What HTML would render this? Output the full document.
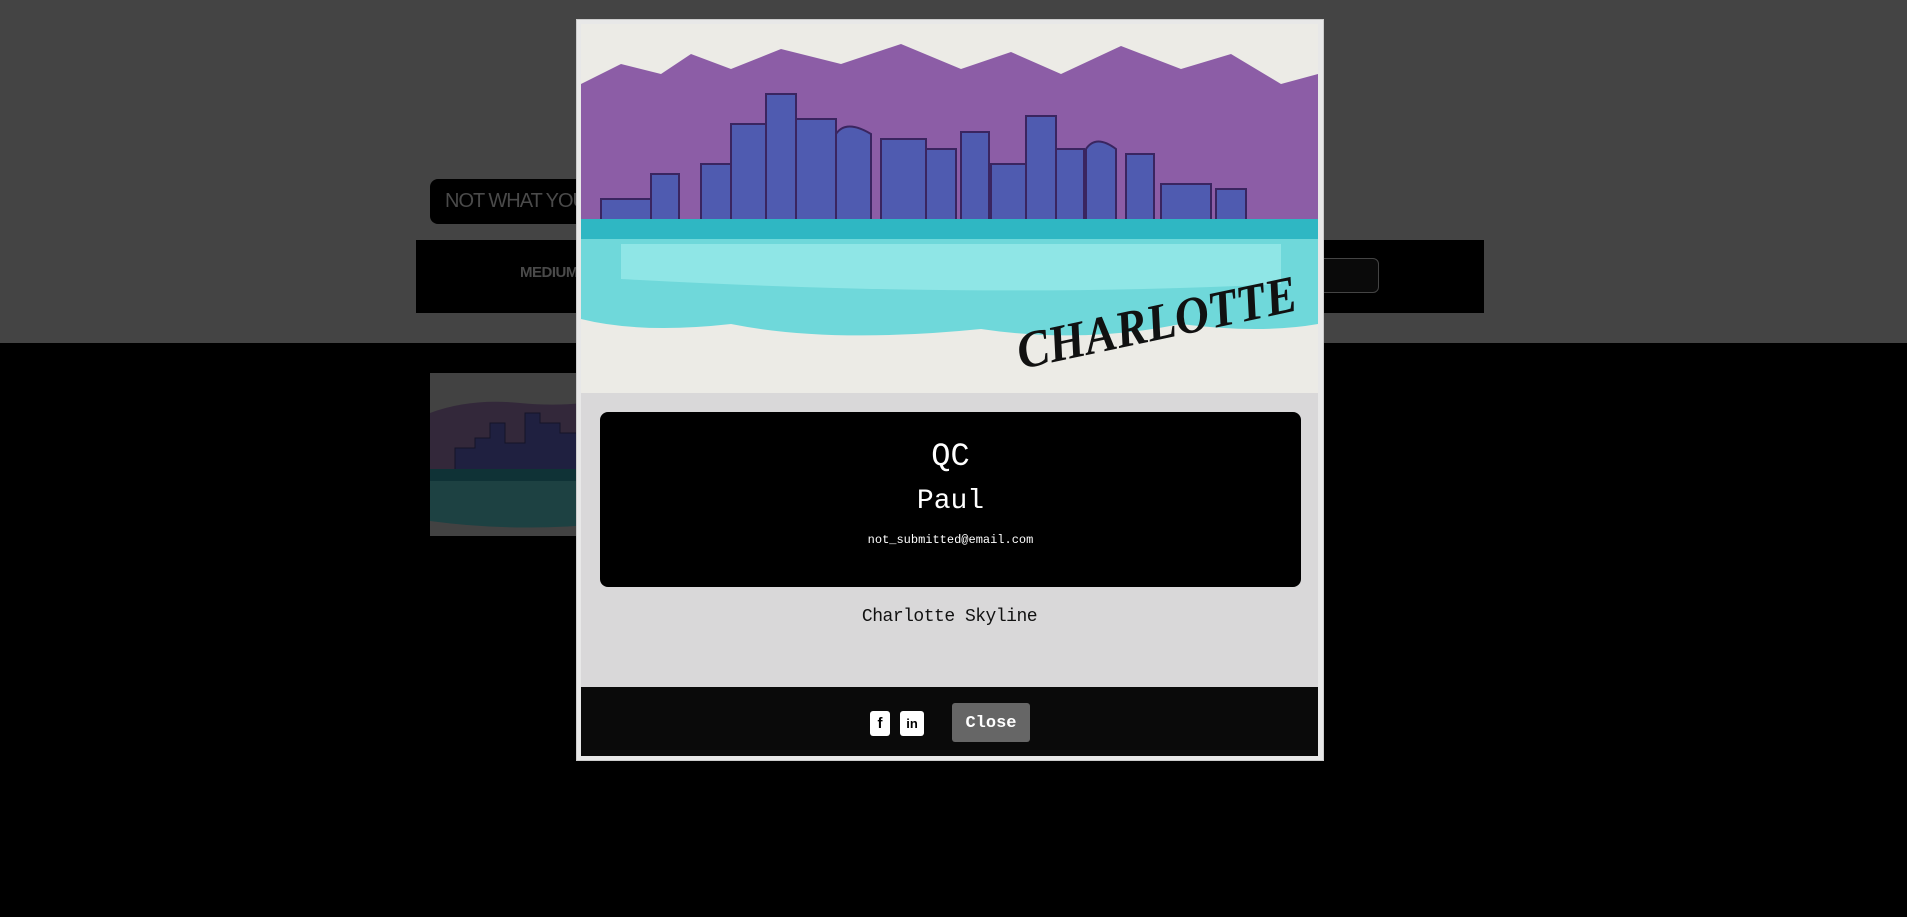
<!DOCTYPE html>
<html><head><meta charset="utf-8"><style>
*{margin:0;padding:0;box-sizing:border-box}
body{width:1907px;height:917px;overflow:hidden;background:#000;position:relative;font-family:"Liberation Sans",sans-serif}
.abs{position:absolute}
</style></head><body>
<div class="abs" style="left:0;top:0;width:1907px;height:343px;background:#444"></div>
<div class="abs" style="left:430px;top:179px;width:200px;height:45px;background:#000;border-radius:8px;color:#4a4a4a;font-size:20px;line-height:45px;padding-left:15px;letter-spacing:-1px">NOT WHAT YOU</div>
<div class="abs" style="left:416px;top:240px;width:1068px;height:73px;background:#000"></div>
<div class="abs" style="left:520px;top:264px;color:#4a4a4a;font-size:15px;font-weight:bold;letter-spacing:-0.5px">MEDIUM</div>
<div class="abs" style="left:1300px;top:258px;width:79px;height:35px;border:1px solid #444;border-radius:6px;background:#0a0a0a"></div>
<div class="abs" style="left:430px;top:373px;width:180px;height:163px;background:#424242;overflow:hidden">
<svg width="180" height="163" viewBox="0 0 180 163">
<path d="M0 40 Q40 25 90 30 T180 25 L180 100 L0 100Z" fill="#33283a"/>
<path d="M25 100 V75 H45 V65 H60 V50 H75 V70 H95 V40 H110 V50 H130 V60 H150 V100Z" fill="#1f2040" stroke="#141428"/>
<rect x="0" y="96" width="180" height="12" fill="#0f3236"/>
<path d="M0 108 H180 V150 Q90 160 0 148Z" fill="#1d4142"/>
</svg></div>

<div class="abs" style="left:576px;top:19px;width:748px;height:742px;background:#e8e8e8;border:1px solid #ccc"></div>
<div class="abs" style="left:581px;top:24px;width:737px;height:369px;overflow:hidden;background:#ecebe6">
<svg width="737" height="369" viewBox="0 0 737 369">
<path d="M0 60 L40 40 L80 50 L110 30 L150 45 L200 25 L260 40 L320 20 L380 45 L430 28 L480 50 L540 22 L600 45 L650 30 L700 60 L737 50 L737 230 L0 230Z" fill="#8c5da6"/>
<g fill="#4f5bb0" stroke="#3a2560" stroke-width="2">
<rect x="70" y="150" width="28" height="50"/>
<rect x="120" y="140" width="30" height="60"/>
<rect x="150" y="100" width="35" height="100"/>
<rect x="185" y="70" width="30" height="130"/>
<rect x="215" y="95" width="40" height="105"/>
<path d="M255 200 V110 Q265 95 290 110 V200Z"/>
<rect x="300" y="115" width="45" height="85"/>
<rect x="345" y="125" width="30" height="75"/>
<rect x="380" y="108" width="28" height="92"/>
<rect x="410" y="140" width="35" height="60"/>
<rect x="445" y="92" width="30" height="108"/>
<rect x="475" y="125" width="28" height="75"/>
<path d="M505 200 V125 Q515 110 535 125 V200Z"/>
<rect x="545" y="130" width="28" height="70"/>
<rect x="580" y="160" width="50" height="40"/>
<rect x="635" y="165" width="30" height="35"/>
<rect x="20" y="175" width="50" height="25"/>
</g>
<rect x="0" y="195" width="737" height="20" fill="#2fb7c3"/>
<path d="M0 215 H737 V300 Q680 310 600 300 Q500 320 400 305 Q250 320 150 300 Q60 310 0 295Z" fill="#6fd8da"/>
<path d="M40 220 H700 V260 Q400 275 40 255Z" fill="#8fe6e6"/>
<text x="440" y="345" transform="rotate(-12 440 345)" font-family="'Liberation Serif',serif" font-style="italic" font-weight="bold" font-size="52" fill="#111" textLength="285" lengthAdjust="spacingAndGlyphs">CHARLOTTE</text>
</svg></div>
<div class="abs" style="left:581px;top:393px;width:737px;height:294px;background:#d9d8d9"></div>
<div class="abs" style="left:600px;top:412px;width:701px;height:175px;background:#000;border-radius:8px;color:#fff;text-align:center;font-family:'Liberation Mono',monospace">
<div style="position:absolute;top:26px;width:100%;font-size:32px">QC</div>
<div style="position:absolute;top:74px;width:100%;font-size:28px">Paul</div>
<div style="position:absolute;top:121px;width:100%;font-size:12px">not_submitted@email.com</div>
</div>
<div class="abs" style="left:581px;top:607px;width:737px;text-align:center;font-family:'Liberation Mono',monospace;font-size:18px;color:#111;letter-spacing:-0.5px">Charlotte Skyline</div>
<div class="abs" style="left:581px;top:687px;width:737px;height:69px;background:#0a0a0a"></div>
<div class="abs" style="left:870px;top:711px;width:20px;height:25px;background:#fff;border-radius:3px;color:#000;font-weight:bold;font-size:15px;text-align:center;line-height:25px">f</div>
<div class="abs" style="left:900px;top:711px;width:24px;height:25px;background:#fff;border-radius:3px;color:#000;font-weight:bold;font-size:13px;text-align:center;line-height:25px">in</div>
<div class="abs" style="left:952px;top:703px;width:78px;height:39px;background:#666;border-radius:3px;color:#fff;font-family:'Liberation Mono',monospace;font-weight:bold;font-size:17px;text-align:center;line-height:41px">Close</div>
</body></html>
